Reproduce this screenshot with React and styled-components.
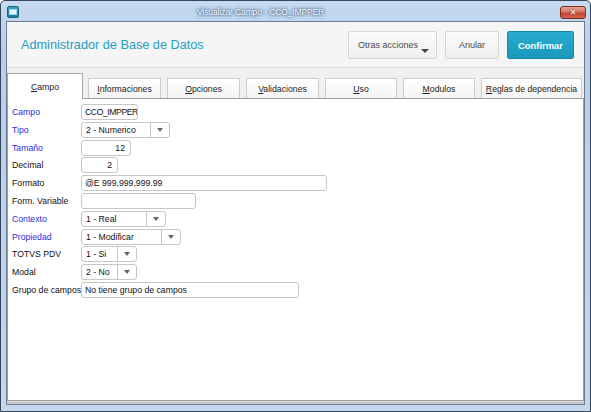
import React from "react";
import styled, { createGlobalStyle } from "styled-components";

const font = `"Liberation Sans", Arial, sans-serif`;

const GlobalStyle = createGlobalStyle`
    html, body {
        margin: 0;
        padding: 0;
        background: #ffffff;
    }
    * {
        box-sizing: border-box;
    }
`;

const Window = styled.div`
    width: 591px;
    height: 412px;
    border: 1px solid #34465a;
    border-radius: 5px 5px 0 0;
    background: linear-gradient(180deg, #c6daf1 0%, #b8cfea 12%, #c3d7ee 100%);
    padding: 0 5px 6px 5px;
    display: flex;
    flex-direction: column;
    font-family: ${font};
`;

const TitleBar = styled.div`
    height: 20px;
    display: flex;
    align-items: center;
    padding-left: 1px;
`;

const AppIcon = styled.div`
    width: 12px;
    height: 12px;
    margin-top: 2px;
    border-radius: 2px;
    background: linear-gradient(180deg, #3aa6c9, #1b7fa4);
    border: 1px solid #18627f;
    display: flex;
    align-items: center;
    justify-content: center;

    &::after {
        content: "";
        width: 6px;
        height: 4px;
        background: #eaf6fb;
        border: 1px solid #9fd3e6;
    }
`;

const TitleText = styled.div`
    flex: 1;
    text-align: center;
    padding-right: 58px;
    padding-top: 1px;
    font-size: 8.3px;
    color: #ffffff;
    text-shadow: 0 0 2px #36567e, 0 0 3px #4a6c96, 0 0 4px #6a8cb4;
`;

const CloseButton = styled.div`
    width: 26px;
    height: 13px;
    margin-top: 2px;
    margin-right: -1px;
    border: 1px solid #7e2a1d;
    border-radius: 3px;
    background: linear-gradient(180deg, #e5a596 0%, #d47a66 45%, #c2452e 55%, #d4664f 100%);
    display: flex;
    align-items: center;
    justify-content: center;
    color: #ffffff;
    font-family: "DejaVu Sans", sans-serif;
    font-size: 8px;
    font-weight: bold;
    text-shadow: 0 0 2px #6b1a10;
`;

const Client = styled.div`
    flex: 1;
    display: flex;
    flex-direction: column;
    border: 1px solid #6b7c90;
    background: #f3f3f3;
`;

const Header = styled.div`
    height: 46px;
    display: flex;
    align-items: center;
    justify-content: space-between;
    padding: 0 10px 0 14px;
    background: #f5f5f5;
    border-bottom: 1px solid #dcdcdc;
`;

const HeaderTitle = styled.div`
    font-size: 12.7px;
    color: #23a0c4;
    margin-top: 1px;
`;

const Actions = styled.div`
    display: flex;
    gap: 8px;
    margin-top: 1px;
`;

const ActionButton = styled.div`
    position: relative;
    height: 28px;
    width: ${(p) => p.$w}px;
    display: flex;
    align-items: center;
    justify-content: ${(p) => (p.$left ? "flex-start" : "center")};
    padding-left: ${(p) => (p.$left ? "9px" : "0")};
    border-radius: 2px;
    font-size: ${(p) => (p.$primary ? "9.4px" : "9px")};
    font-weight: ${(p) => (p.$primary ? "bold" : "normal")};
    color: ${(p) => (p.$primary ? "#ffffff" : "#4a4a4a")};
    border: 1px solid ${(p) => (p.$primary ? "#1889aa" : "#d6d6d6")};
    background: ${(p) =>
        p.$primary
            ? "linear-gradient(180deg, #28acce 0%, #1a98bb 100%)"
            : "linear-gradient(180deg, #fbfbfb 0%, #efefef 100%)"};
`;

const Caret = styled.span`
    position: absolute;
    right: 7px;
    bottom: 5px;
    width: 0;
    height: 0;
    border-left: 4px solid transparent;
    border-right: 4px solid transparent;
    border-top: 4px solid #444;
`;

const TabsArea = styled.div`
    flex: 1;
    display: flex;
    flex-direction: column;
    padding-top: 4px;
    padding-bottom: 3px;
    background: linear-gradient(180deg, #f0f0f0 0%, #f0f0f0 97%, #cfcfcf 100%);
`;

const TabRow = styled.div`
    height: 26px;
    display: flex;
    align-items: flex-end;
    gap: 6px;
`;

const Tab = styled.div`
    width: ${(p) => p.$w}px;
    height: ${(p) => (p.$active ? 26 : 20)}px;
    margin-right: ${(p) => (p.$active ? -1 : 0)}px;
    display: flex;
    align-items: center;
    justify-content: center;
    padding-top: ${(p) => (p.$active ? 0 : 1)}px;
    font-size: 8.7px;
    color: #222;
    border: 1px solid ${(p) => (p.$active ? "#a8a8a8" : "#cdcdcd")};
    border-bottom: none;
    margin-bottom: ${(p) => (p.$active ? -1 : 0)}px;
    position: relative;
    z-index: ${(p) => (p.$active ? 2 : 1)};
    background: ${(p) =>
        p.$active ? "#ffffff" : "linear-gradient(180deg, #ffffff 0%, #f4f4f4 100%)"};
    white-space: nowrap;

    u {
        text-decoration: underline;
        text-underline-offset: 1px;
    }
`;

const Panel = styled.div`
    flex: 1;
    background: #ffffff;
    border: 1px solid #9e9e9e;
    box-shadow: 0 1px 0 #e2e2e2, 0 2px 0 #bdbdbd;
    padding: 5px 0 0 4px;
`;

const Form = styled.div`
    display: grid;
    grid-template-columns: 69px auto;
    grid-auto-rows: 16px;
    row-gap: 1.8px;
    justify-items: start;
    align-items: center;
`;

const Label = styled.div`
    font-size: 8.7px;
    color: ${(p) => (p.$required ? "#2b2be0" : "#111111")};
    white-space: nowrap;
`;

const Input = styled.div`
    width: ${(p) => p.$w}px;
    height: 16px;
    border: 1px solid #c6c6c6;
    border-radius: 3px;
    background: #ffffff;
    display: flex;
    align-items: center;
    justify-content: ${(p) => (p.$right ? "flex-end" : "flex-start")};
    padding: 0 5px 0 3px;
    font-size: 8.7px;
    letter-spacing: ${(p) => (p.$tight ? "-0.45px" : "0")};
    color: #111;
    white-space: nowrap;
    overflow: hidden;
`;

const Select = styled.div`
    width: ${(p) => p.$w}px;
    height: 16px;
    border: 1px solid #c6c6c6;
    border-radius: 3px;
    background: #ffffff;
    display: flex;
    align-items: stretch;
    font-size: 8.7px;
    color: #111;
`;

const SelectValue = styled.div`
    flex: 1;
    display: flex;
    align-items: center;
    padding-left: 4px;
    border-right: 1px solid #c6c6c6;
    white-space: nowrap;
`;

const SelectArrow = styled.div`
    width: 18px;
    display: flex;
    align-items: center;
    justify-content: center;

    &::after {
        content: "";
        border-left: 3.5px solid transparent;
        border-right: 3.5px solid transparent;
        border-top: 4px solid #666;
    }
`;

const tabs = [
    { first: "C", rest: "ampo", w: 76, active: true },
    { first: "I", rest: "nformaciones", w: 73 },
    { first: "O", rest: "pciones", w: 73 },
    { first: "V", rest: "alidaciones", w: 73 },
    { first: "U", rest: "so", w: 72 },
    { first: "M", rest: "odulos", w: 72 },
    { first: "R", rest: "eglas de dependencia", w: 101 },
];

const rows = [
    { label: "Campo", required: true, type: "input", value: "CCO_IMPPER", w: 57, tight: true },
    { label: "Tipo", required: true, type: "select", value: "2 - Numerico", w: 89 },
    { label: "Tamaño", required: true, type: "input", value: "12", w: 50, right: true },
    { label: "Decimal", type: "input", value: "2", w: 37, right: true },
    { label: "Formato", type: "input", value: "@E 999,999,999.99", w: 246 },
    { label: "Form. Variable", type: "input", value: "", w: 115 },
    { label: "Contexto", required: true, type: "select", value: "1 - Real", w: 85 },
    { label: "Propiedad", required: true, type: "select", value: "1 - Modificar", w: 100 },
    { label: "TOTVS PDV", type: "select", value: "1 - Si", w: 56 },
    { label: "Modal", type: "select", value: "2 - No", w: 56 },
    { label: "Grupo de campos", type: "input", value: "No tiene grupo de campos", w: 218 },
];

export default function App() {
    return (
        <>
            <GlobalStyle />
            <Window>
                <TitleBar>
                    <AppIcon />
                    <TitleText>Visualizar Campo - CCO_IMPPER</TitleText>
                    <CloseButton>✕</CloseButton>
                </TitleBar>
                <Client>
                    <Header>
                        <HeaderTitle>Administrador de Base de Datos</HeaderTitle>
                        <Actions>
                            <ActionButton $w={89} $left>
                                Otras acciones
                                <Caret />
                            </ActionButton>
                            <ActionButton $w={54}>Anular</ActionButton>
                            <ActionButton $w={67} $primary>Confirmar</ActionButton>
                        </Actions>
                    </Header>
                    <TabsArea>
                        <TabRow>
                            {tabs.map((t) => (
                                <Tab key={t.rest} $w={t.w} $active={t.active}>
                                    <span>
                                        <u>{t.first}</u>
                                        {t.rest}
                                    </span>
                                </Tab>
                            ))}
                        </TabRow>
                        <Panel>
                            <Form>
                                {rows.map((r) => (
                                    <React.Fragment key={r.label}>
                                        <Label $required={r.required}>{r.label}</Label>
                                        {r.type === "input" ? (
                                            <Input $w={r.w} $right={r.right} $tight={r.tight}>
                                                {r.value}
                                            </Input>
                                        ) : (
                                            <Select $w={r.w}>
                                                <SelectValue>{r.value}</SelectValue>
                                                <SelectArrow />
                                            </Select>
                                        )}
                                    </React.Fragment>
                                ))}
                            </Form>
                        </Panel>
                    </TabsArea>
                </Client>
            </Window>
        </>
    );
}
